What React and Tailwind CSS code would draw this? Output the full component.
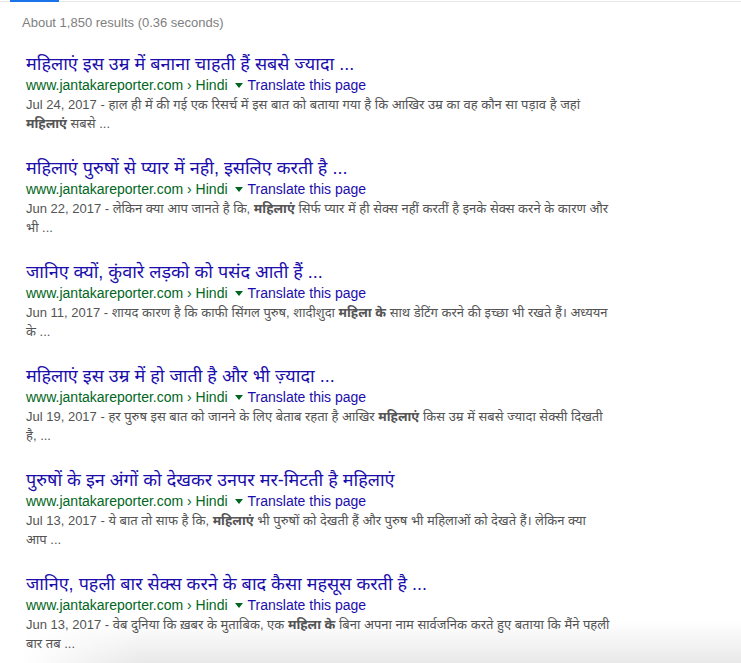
import React from "react";

const results = [
  {
    title: "महिलाएं इस उम्र में बनाना चाहती हैं सबसे ज्यादा ...",
    date: "Jul 24, 2017",
    lines: [
      [["हाल ही में की गई एक रिसर्च में इस बात को बताया गया है कि आखिर उम्र का वह कौन सा पड़ाव है जहां", false]],
      [["महिलाएं", true], [" सबसे ...", false]],
    ],
  },
  {
    title: "महिलाएं पुरुषों से प्यार में नही, इसलिए करती है ...",
    date: "Jun 22, 2017",
    lines: [
      [["लेकिन क्या आप जानते है कि, ", false], ["महिलाएं", true], [" सिर्फ प्यार में ही सेक्स नहीं करतीं है इनके सेक्स करने के कारण और", false]],
      [["भी ...", false]],
    ],
  },
  {
    title: "जानिए क्यों, कुंवारे लड़को को पसंद आती हैं ...",
    date: "Jun 11, 2017",
    lines: [
      [["शायद कारण है कि काफी सिंगल पुरुष, शादीशुदा ", false], ["महिला के", true], [" साथ डेटिंग करने की इच्छा भी रखते हैं। अध्ययन", false]],
      [["के ...", false]],
    ],
  },
  {
    title: "महिलाएं इस उम्र में हो जाती है और भी ज़्यादा ...",
    date: "Jul 19, 2017",
    lines: [
      [["हर पुरुष इस बात को जानने के लिए बेताब रहता है आखिर ", false], ["महिलाएं", true], [" किस उम्र में सबसे ज्यादा सेक्सी दिखती", false]],
      [["है, ...", false]],
    ],
  },
  {
    title: "पुरुषों के इन अंगों को देखकर उनपर मर-मिटती है महिलाएं",
    date: "Jul 13, 2017",
    lines: [
      [["ये बात तो साफ है कि, ", false], ["महिलाएं", true], [" भी पुरुषों को देखती हैं और पुरुष भी महिलाओं को देखते हैं। लेकिन क्या", false]],
      [["आप ...", false]],
    ],
  },
  {
    title: "जानिए, पहली बार सेक्स करने के बाद कैसा महसूस करती है ...",
    date: "Jun 13, 2017",
    lines: [
      [["वेब दुनिया कि ख़बर के मुताबिक, एक ", false], ["महिला के", true], [" बिना अपना नाम सार्वजनिक करते हुए बताया कि मैंने पहली", false]],
      [["बार तब ...", false]],
    ],
  },
];

function Result({ r }) {
  return (
    <div className="mb-[24px]">
      <div className="h-[22px] leading-[22px] text-[18px] text-[#1a0dab] whitespace-nowrap">
        {r.title}
      </div>
      <div className="h-[20px] leading-[20px] text-[14px] whitespace-nowrap flex items-center">
        <span className="text-[#006621]">www.jantakareporter.com › Hindi</span>
        <span className="inline-block ml-[7px] mr-[5px] w-0 h-0 border-l-[4px] border-r-[4px] border-t-[5px] border-l-transparent border-r-transparent border-t-[#006621]" />
        <span className="text-[#1a0dab]">Translate this page</span>
      </div>
      <div className="text-[13px] leading-[19px] text-[#545454]">
        {r.lines.map((line, i) => (
          <div key={i} className="whitespace-nowrap h-[19px]">
            {i === 0 && <span>{r.date} - </span>}
            {line.map(([t, b], j) =>
              b ? (
                <b key={j} className="font-bold text-[#545454]">{t}</b>
              ) : (
                <span key={j}>{t}</span>
              )
            )}
          </div>
        ))}
      </div>
    </div>
  );
}

export default function App() {
  return (
    <div
      className="relative w-[741px] h-[663px] overflow-hidden bg-white"
      style={{ fontFamily: '"Liberation Sans", Arial, "Noto Sans", sans-serif' }}
    >
      <div className="relative h-[2px]">
        <div className="absolute left-0 right-0 bottom-0 h-px bg-[#e8e8e8]" />
        <div className="absolute left-[10px] top-0 w-[49px] h-[2px] bg-[#1a73e8]" />
      </div>
      <div className="pl-[22px] pt-[13px] h-[29px] text-[13px] leading-[16px] text-[#808080]">
        About 1,850 results (0.36 seconds)
      </div>
      <div className="pl-[26px] pt-[22px]">
        {results.map((r, i) => (
          <Result key={i} r={r} />
        ))}
      </div>
      <div className="pointer-events-none absolute left-0 right-0 bottom-0 h-[42px] bg-[linear-gradient(to_bottom,rgba(0,0,0,0),rgba(0,0,0,0.085))] [mask-image:linear-gradient(to_right,transparent_20px,black_140px)]" />
    </div>
  );
}
